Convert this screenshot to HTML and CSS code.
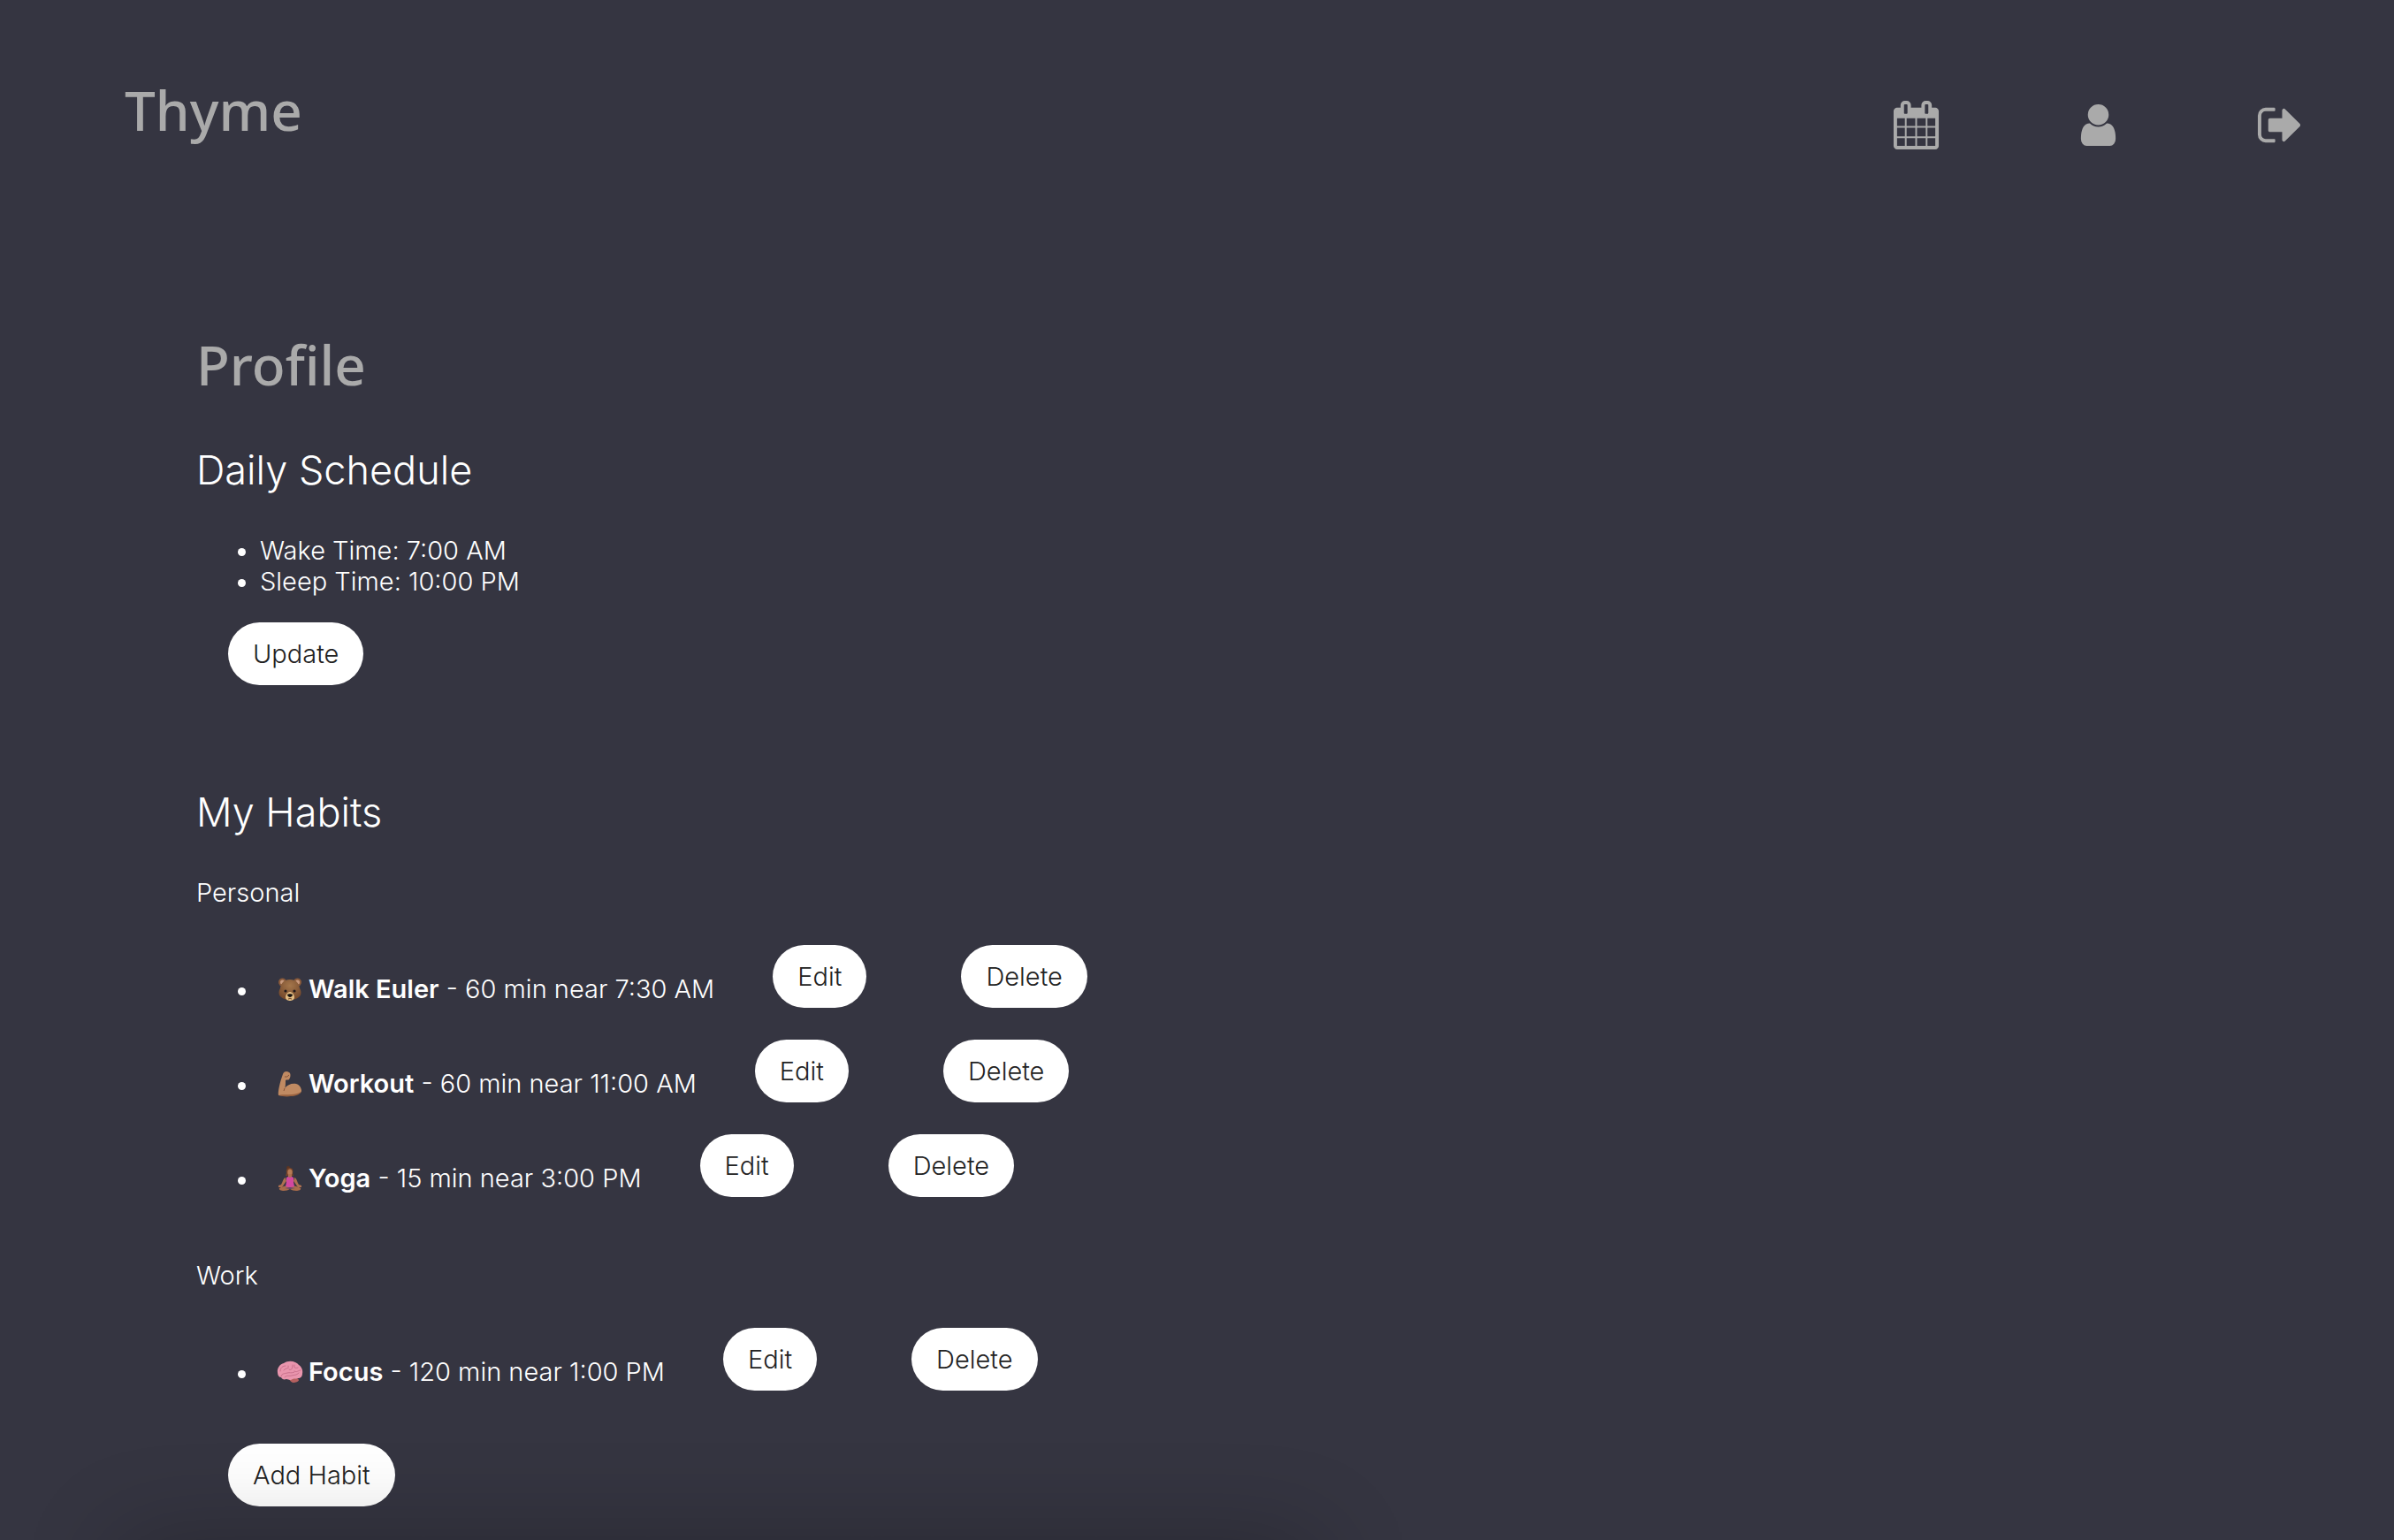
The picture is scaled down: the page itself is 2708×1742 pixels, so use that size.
FILE: index.html
```html
<!DOCTYPE html>
<html lang="en">
<head>
<meta charset="utf-8">
<title>Thyme</title>
<meta name="viewport" content="width=device-width, initial-scale=1">
<link rel="stylesheet" href="styles.css">
</head>
<body>
<header class="site-header">
  <a class="brand" href="#">Thyme</a>
  <nav class="site-nav" aria-label="Main">
    <a href="#" aria-label="Calendar"><svg class="nav-icon" viewBox="0 0 1792 1792"><path d="M192 1664h288v-288h-288v288zm352 0h320v-288h-320v288zm-352-352h288v-320h-288v320zm352 0h320v-320h-320v320zm-352-384h288v-288h-288v288zm736 736h320v-288h-320v288zm-384-736h320v-288h-320v288zm768 736h288v-288h-288v288zm-384-352h320v-320h-320v320zm-352-864v-288q0-13-9.500-22.500t-22.500-9.500h-64q-13 0-22.500 9.500t-9.500 22.500v288q0 13 9.500 22.500t22.500 9.500h64q13 0 22.500-9.500t9.500-22.500zm736 864h288v-320h-288v320zm-384-384h320v-288h-320v288zm384 0h288v-288h-288v288zm32-480v-288q0-13-9.500-22.500t-22.500-9.500h-64q-13 0-22.500 9.500t-9.500 22.500v288q0 13 9.500 22.500t22.500 9.500h64q13 0 22.500-9.500t9.500-22.500zm384-64v1280q0 52-38 90t-90 38h-1408q-52 0-90-38t-38-90v-1280q0-52 38-90t90-38h128v-96q0-66 47-113t113-47h64q66 0 113 47t47 113v96h384v-96q0-66 47-113t113-47h64q66 0 113 47t47 113v96h128q52 0 90 38t38 90z"/></svg></a>
    <a href="#" aria-label="Profile"><svg class="nav-icon" viewBox="0 0 1792 1792"><path d="M1536 1399q0 109-62.500 187t-150.500 78h-854q-88 0-150.500-78t-62.500-187q0-85 8.500-160.500t31.500-152 58.500-131 94-89 134.500-34.500q131 128 313 128t313-128q76 0 134.500 34.500t94 89 58.500 131 31.500 152 8.500 160.500zm-256-887q0 159-112.500 271.500t-271.500 112.500-271.500-112.500-112.500-271.500 112.500-271.500 271.500-112.500 271.500 112.500 112.500 271.500z"/></svg></a>
    <a href="#" aria-label="Log out"><svg class="nav-icon" viewBox="0 0 1792 1792"><path d="M704 1440q0 4 1 20t.5 26.500-3 23.500-10 19.500-20.500 6.500h-320q-119 0-203.500-84.500t-84.500-203.500v-704q0-119 84.500-203.500t203.500-84.500h320q13 0 22.500 9.500t9.500 22.500q0 4 1 20t.5 26.500-3 23.500-10 19.500-20.500 6.500h-320q-66 0-113 47t-47 113v704q0 66 47 113t113 47h312l11.500 1 11.500 3 8 5.500 7 9 2 13.500zm928-544q0 26-19 45l-544 544q-19 19-45 19t-45-19-19-45v-288h-448q-26 0-45-19t-19-45v-384q0-26 19-45t45-19h448v-288q0-26 19-45t45-19 45 19l544 544q19 19 19 45z"/></svg></a>
  </nav>
</header>

<main class="profile">
  <h1 class="page-title">Profile</h1>

  <section class="block">
    <h2 class="block-title">Daily Schedule</h2>
    <ul class="times">
      <li class="bulleted">Wake Time: 7:00 AM</li>
      <li class="bulleted">Sleep Time: 10:00 PM</li>
    </ul>
    <button class="pill schedule-update" type="button">Update</button>
  </section>

  <section class="block">
    <h2 class="block-title">My Habits</h2>
    <h3 class="group-title">Personal</h3>
    <ul class="habits">
      <li class="habit bulleted">
        <svg class="emoji" viewBox="0 0 30 30" role="img" aria-label="Bear"><defs><radialGradient id="fur" cx=".5" cy=".3" r=".7"><stop offset="0" stop-color="#a4764b"/><stop offset="1" stop-color="#74482b"/></radialGradient></defs><circle cx="6.500" cy="7" r="4.500" fill="#8a5a3a"/><circle cx="23.500" cy="7" r="4.500" fill="#8a5a3a"/><circle cx="6.500" cy="7" r="2.500" fill="#c99a7e"/><circle cx="23.500" cy="7" r="2.500" fill="#c99a7e"/><path d="M15 4C8 4 5 8 4 14c-2 3-2 7 0 9 3 3 7 4 11 4s8-1 11-4c2-2 2-6 0-9C25 8 22 4 15 4z" fill="url(#fur)"/><path d="M15 18c-3 0-5 4-5 6 0 3 3 4 5 4s5-1 5-4c0-2-2-6-5-6z" fill="#e3bd83"/><path d="M12 21c1-1 5-1 6 0 0 2-2 3-3 3s-3-1-3-3z" fill="#171210"/><path d="M13 26q2-1 4 0" stroke="#6b4228" fill="none"/><circle cx="10" cy="17" r="1.600" fill="#20181a"/><circle cx="20" cy="17" r="1.600" fill="#20181a"/></svg>
        <span class="habit-text"><strong>Walk Euler</strong> - 60 min near 7:30 AM</span>
        <button class="pill edit" type="button">Edit</button>
        <button class="pill delete" type="button">Delete</button>
      </li>
      <li class="habit bulleted">
        <svg class="emoji" viewBox="0 0 30 30" role="img" aria-label="Flexed arm"><path d="M2 28C1 24 4 12 7 4c1-3 4-4 7-2 2 1 2 5 0 8-1 1-3 0-4 1 0 4 0 8-1 9 3-4 8-6 13-5 4 1 6 5 6 8 0 2-4 4-8 5-6 1-12 1-18 0z" fill="#c08a62"/><path d="M2 28c5-2 17 1 26-4-2 3-7 5-12 5-5 1-10 0-14-1z" fill="#98613f"/><path d="M9 7q3 1 5-2M9 20l-1 3" stroke="#875438" stroke-width="1" fill="none"/></svg>
        <span class="habit-text"><strong>Workout</strong> - 60 min near 11:00 AM</span>
        <button class="pill edit" type="button">Edit</button>
        <button class="pill delete" type="button">Delete</button>
      </li>
      <li class="habit bulleted">
        <svg class="emoji" viewBox="0 0 30 30" role="img" aria-label="Woman in lotus position"><circle cx="13" cy="3" r="2" fill="#5b3522"/><path d="M11 9c-1-5 2-6 4-6 3 0 4 3 3 6l1 3h-9z" fill="#734229"/><ellipse cx="15" cy="8" rx="2.700" ry="3.600" fill="#b77b55"/><path d="M13 10h4v4h-4zM10 14c-3 1-3 5-5 8l-3 1v2h4c2-2 3-5 5-7zM20 14c3 1 3 5 5 8l3 1v2h-4c-2-2-3-5-5-7z" fill="#ad7050"/><path d="M3 26c3-2 8-3 12-3s9 1 12 3c1 2-2 3-5 3-3 0-5-1-7-2-2 1-4 2-7 2-3 0-6-1-5-3z" fill="#a96c4b"/><path d="M11 14l2-1q2 2 4 0l2 1v5l1 5q-5 2-10 0l1-5z" fill="#d3489f"/><path d="M9 26l6-1 6 1-6 1z" fill="#65436b"/></svg>
        <span class="habit-text"><strong>Yoga</strong> - 15 min near 3:00 PM</span>
        <button class="pill edit" type="button">Edit</button>
        <button class="pill delete" type="button">Delete</button>
      </li>
    </ul>

    <h3 class="group-title">Work</h3>
    <ul class="habits">
      <li class="habit bulleted">
        <svg class="emoji" viewBox="0 0 30 30" role="img" aria-label="Brain"><path d="M16 22c3-2 8-1 9 2 0 2-4 3-6 3s-4-2-5-4z" fill="#b5605f"/><path d="M1 16C0 10 4 6 8 5c6-4 14-2 17 2 3 2 5 6 4 10 0 3-2 5-5 5-3 1-4 0-6 1-3 2-5 0-7 0-3 1-5 0-6-2-2 0-4-2-4-5z" fill="#e995ad"/><path d="M4 14c0-4 3-6 6-6M8 13c3-4 6 0 5-5M14 12c3 2 4-2 4-5M20 7c-1 4 2 4 4 3M27 13c-3 0-4 3-7 1M5 20c1-4 4-3 7-4s4 1 8-1M9 21c2-3 5-1 8-2s5 0 8-3" fill="none" stroke="#c9708c" stroke-width="1" stroke-linecap="round"/></svg>
        <span class="habit-text"><strong>Focus</strong> - 120 min near 1:00 PM</span>
        <button class="pill edit" type="button">Edit</button>
        <button class="pill delete" type="button">Delete</button>
      </li>
    </ul>
    <button class="pill habit-add" type="button">Add Habit</button>
  </section>
</main>
<div class="edge-shade"></div>
</body>
</html>
```
FILE: styles.css
```css
* {
  box-sizing: border-box;
}

body {
  margin: 0;
  min-height: 100vh;
  background: #353541;
  color: #fff;
  font: 300 29px/35px Inter, "Liberation Sans", sans-serif;
}

h1, h2, h3, ul {
  margin: 0;
  padding: 0;
  font-weight: inherit;
}

.site-header {
  display: flex;
  justify-content: space-between;
  align-items: flex-start;
  padding: 84px 101px 0 141px;
}

.brand,
.page-title {
  color: #aaa;
  font: 500 62px/80px "Noto Sans", sans-serif;
  text-decoration: none;
}

.site-nav {
  display: flex;
  gap: 151px;
  padding-top: 30px;
}

.site-nav a {
  display: block;
  color: #aaa;
}

.nav-icon {
  display: block;
  width: 55px;
  height: 55px;
  fill: currentColor;
}

.profile {
  padding: 203px 222px 37px;
}

.block {
  margin-top: 52px;
}

.block + .block {
  margin-top: 116px;
}

.block-title {
  margin-bottom: 45px;
  font-size: 45px;
  line-height: 56px;
}

.group-title {
  font-size: 29px;
}

.times,
.habits {
  padding-left: 47px;
  list-style: none;
}

.bulleted {
  display: flex;
}

.bulleted::before {
  content: "";
  flex: none;
  width: 9px;
  height: 9px;
  margin: 15px 16px 0 0;
  border-radius: 50%;
  background: currentColor;
}

.habits {
  display: flex;
  flex-direction: column;
  gap: 36px;
  margin-top: 42px;
}

.habits + .group-title {
  margin-top: 71px;
}

.habit {
  align-items: flex-end;
}

.habit::before {
  margin: 0 35px 14px 0;
}

.emoji {
  width: 30px;
  height: 30px;
  margin: 0 6px 6px 0;
}

.habit-text {
  padding-bottom: 4px;
}

.habit-text strong {
  font-weight: 600;
}

.pill {
  height: 71px;
  padding: 0 28px;
  border: 0;
  border-radius: 36px;
  background: #fff;
  color: #222;
  font: inherit;
}

.schedule-update {
  margin: 29px 0 0 36px;
}

.habit-add {
  margin: 60px 0 0 36px;
}

.edit {
  margin-left: 66px;
}

.delete {
  margin-left: 107px;
}

/* Soft shade rising from the lower edge of the window */
.edge-shade {
  position: fixed;
  top: 100%;
  left: 5%;
  width: 50%;
  height: 200px;
  box-shadow: 0 0 110px rgb(0 0 0 / 24%);
  pointer-events: none;
}
```
